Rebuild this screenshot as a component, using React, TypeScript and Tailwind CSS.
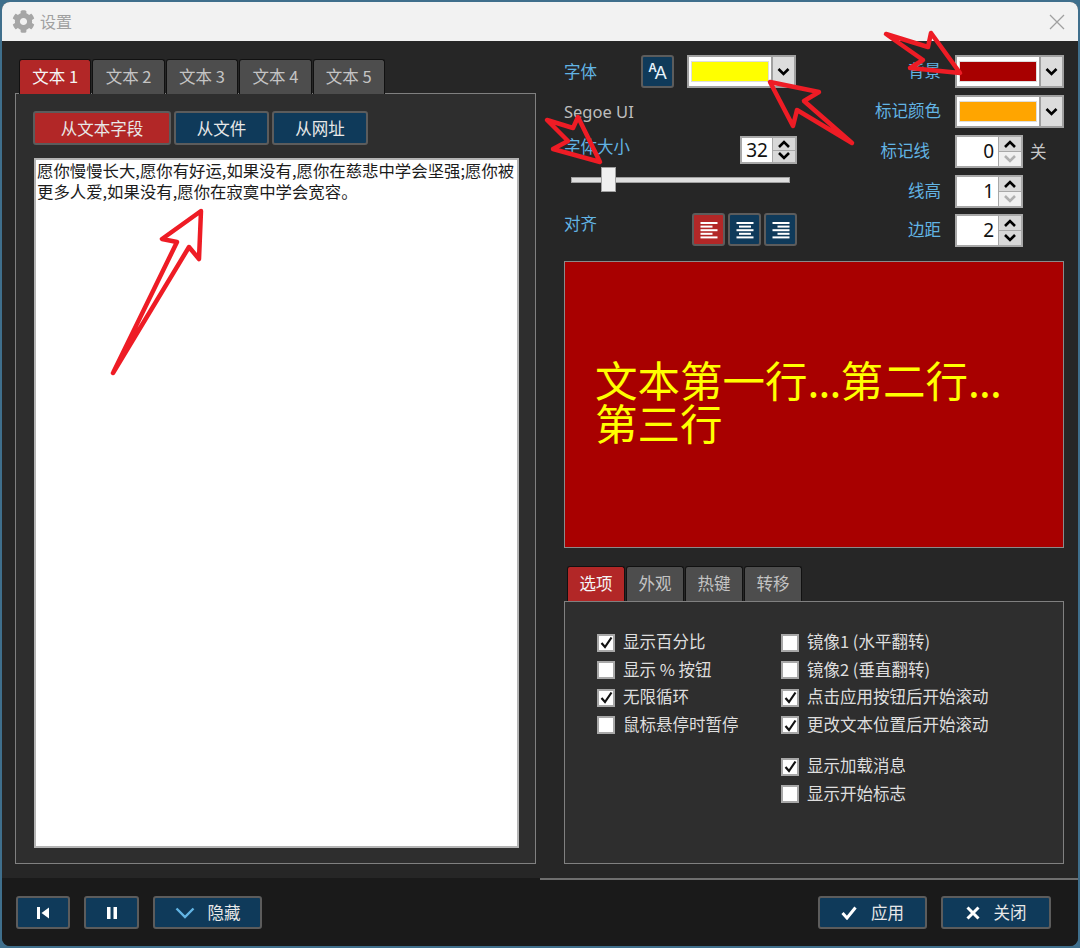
import React from "react";
import { FaCog } from "react-icons/fa";

const Chev = ({ up = false, dim = false, w = 12 }: { up?: boolean; dim?: boolean; w?: number }) => (
  <svg width={w} height={8} viewBox="0 0 12 8">
    <path d={up ? "M1 7 L6 2 L11 7" : "M1 1 L6 6 L11 1"} fill="none" stroke={dim ? "#b0b0b0" : "#000"} strokeWidth="2.6" />
  </svg>
);

const Tab = ({ label, active, w }: { label: string; active?: boolean; w: string }) => (
  <div
    className={`${w} flex h-[35px] items-center justify-center rounded-t-[3px] border border-b-0 border-[#111111] pb-[2px] text-[16.5px] ${
      active ? "bg-[#b22727] text-[#f5f5f5]" : "bg-[#4d4d4d] text-[#c4c4c4]"
    }`}
  >
    {label}
  </div>
);

const Btn = ({ children, red, cls }: { children: React.ReactNode; red?: boolean; cls: string }) => (
  <div
    className={`${cls} flex items-center justify-center rounded-[3px] border-2 border-[#5c5c5c] text-[16.5px] text-[#e8e8e8] ${
      red ? "bg-[#b22727]" : "bg-[#0f3a5a]"
    }`}
  >
    {children}
  </div>
);

const Combo = ({ color }: { color: string }) => (
  <div className="flex h-[33px] w-[109px] border-2 border-[#a0a0a0] bg-white">
    <div className="flex flex-1 items-center px-[2px]">
      <div className="h-[21px] w-full border border-[#dddddd]" style={{ background: color }} />
    </div>
    <div className="flex w-[23px] items-center justify-center border-l-2 border-[#a0a0a0] bg-[#dcdcdc]">
      <Chev w={13} />
    </div>
  </div>
);

const Spin = ({ value, dim, w = "w-[68px]", h = "h-[33px]" }: { value: number; dim?: boolean; w?: string; h?: string }) => (
  <div className={`${w} ${h} flex border-2 border-[#a8a8a8] bg-white`}>
    <div className="flex flex-1 items-center justify-end pr-[4px] font-['Noto_Sans'] text-[19px] text-[#111111]">{value}</div>
    <div className="flex w-[23px] flex-col border-l border-[#a8a8a8] bg-[#d8d8d8]">
      <div className="flex flex-1 items-center justify-center border-b border-[#a8a8a8]">
        <Chev up />
      </div>
      <div className={`flex flex-1 items-center justify-center ${dim ? "bg-[#f0f0f0]" : ""}`}>
        <Chev dim={dim} />
      </div>
    </div>
  </div>
);

const AlignIcon = ({ kind }: { kind: "l" | "c" | "r" }) => {
  const lines = [17, 12, 17, 12, 17];
  return (
    <svg width="18" height="18" viewBox="0 0 18 18">
      {lines.map((len, i) => {
        const x = kind === "l" ? 0.5 : kind === "c" ? (18 - len) / 2 : 17.5 - len;
        return <rect key={i} x={x} y={1 + i * 3.6} width={len} height="2" fill="#fff" />;
      })}
    </svg>
  );
};

const Check = ({ label, on }: { label: string; on?: boolean }) => (
  <div className="flex h-[27.5px] items-center gap-[8px] text-[16.5px] text-[#dedede]">
    <div className="flex h-[18px] w-[18px] items-center justify-center border-2 border-[#a8a8a8] bg-white">
      {on && (
        <svg width="13" height="13" viewBox="0 0 13 13">
          <path d="M1.5 7 L5 11 L11.5 1.5" fill="none" stroke="#111" strokeWidth="2.2" />
        </svg>
      )}
    </div>
    <span className="pb-[2px]">{label}</span>
  </div>
);

const Label = ({ children }: { children: React.ReactNode }) => (
  <span className="text-[16.5px] text-[#62b4e4]">{children}</span>
);

const Arrow = ({ points }: { points: string }) => (
  <polygon points={points} fill="none" stroke="#ee1c25" strokeWidth="4.5" strokeLinejoin="round" />
);

export default function App() {
  return (
    <div
      className="h-[948px] w-[1080px] overflow-hidden bg-[#3f6f8c] pl-[2px] pt-[2px]"
      style={{ fontFamily: '"Noto Sans CJK SC", "Noto Sans", sans-serif' }}
    >
      <div className="relative flex h-[944px] w-[1076px] flex-col overflow-hidden rounded-[8px] bg-[#262626]">
        {/* title bar */}
        <div className="flex h-[39px] items-center bg-[#f2f2f2] pl-[10px] pr-[13px]">
          <FaCog className="text-[23px] text-[#a6a6a6]" />
          <span className="ml-[5px] pb-[2px] text-[16px] text-[#a0a0a0]">设置</span>
          <svg className="ml-auto" width="16" height="16" viewBox="0 0 16 16">
            <path d="M1 1 L15 15 M15 1 L1 15" stroke="#a0a0a0" strokeWidth="1.3" />
          </svg>
        </div>

        {/* main */}
        <div className="flex h-[837px]">
          {/* left */}
          <div className="w-[538px] pl-[13px] pt-[18px]">
            <div className="ml-[4px] flex h-[34px] gap-[1px]">
              <Tab label="文本 1" active w="w-[72.4px]" />
              <Tab label="文本 2" w="w-[72.4px]" />
              <Tab label="文本 3" w="w-[72.4px]" />
              <Tab label="文本 4" w="w-[72.4px]" />
              <Tab label="文本 5" w="w-[72.4px]" />
            </div>
            <div className="flex h-[771px] w-[521px] flex-col border border-[#808080] bg-[#2e2e2e] pl-[17px] pt-[17px]">
              <div className="flex gap-[3px]">
                <Btn red cls="h-[34px] w-[138px]">从文本字段</Btn>
                <Btn cls="h-[34px] w-[95px]">从文件</Btn>
                <Btn cls="h-[34px] w-[96px]">从网址</Btn>
              </div>
              <div className="ml-[1px] mt-[13px] h-[690px] w-[485px] border-2 border-[#b4b4b4] bg-white pl-[1px] text-[16.4px] leading-[21px] text-[#1c1c1c]">
                愿你慢慢长大,愿你有好运,如果没有,愿你在慈悲中学会坚强;愿你被更多人爱,如果没有,愿你在寂寞中学会宽容。
              </div>
            </div>
          </div>

          {/* right */}
          <div className="w-[500px] pl-[24px] pt-[14px]">
            <div className="flex h-[206px] w-[500px] justify-between">
              <div className="w-[233px]">
                <div className="flex h-[33px] items-center">
                  <div className="w-[77px] pb-[1px]"><Label>字体</Label></div>
                  <Btn cls="h-[33px] w-[33px]">
                    <span className="flex items-start font-['Liberation_Sans'] leading-none text-[#e6f2fa]">
                      <span className="text-[12px] font-bold">A</span>
                      <span className="ml-[-2px] mt-[2px] text-[18px]">A</span>
                    </span>
                  </Btn>
                  <div className="ml-[13px]"><Combo color="#ffff00" /></div>
                </div>
                <div className="mt-[12px] font-['Noto_Sans'] text-[16.5px] leading-[24px] text-[#bdbdbd]">Segoe UI</div>
                <div className="mt-[12px] flex h-[28px] items-center justify-between">
                  <div className="mb-[7px]"><Label>字体大小</Label></div>
                  <Spin value={32} w="w-[57px]" h="h-[28px]" />
                </div>
                <div className="relative ml-[7px] mt-[13px] h-[6px] w-[219px] border border-[#a0a0a0] bg-[#dedede]">
                  <div className="absolute left-[29px] top-[-11px] h-[25px] w-[15px] border border-[#a0a0a0] bg-[#f0f0f0]" />
                </div>
                <div className="mt-[30px] flex h-[33px] items-center justify-between">
                  <div className="mb-[12px]"><Label>对齐</Label></div>
                  <div className="flex gap-[3px]">
                    <Btn red cls="h-[33px] w-[33px]"><AlignIcon kind="l" /></Btn>
                    <Btn cls="h-[33px] w-[33px]"><AlignIcon kind="c" /></Btn>
                    <Btn cls="h-[33px] w-[33px]"><AlignIcon kind="r" /></Btn>
                  </div>
                </div>
              </div>

              <div className="flex w-[189px] flex-col">
                <div className="flex h-[33px] items-center justify-end gap-[14px]"><div className="pb-[3px]"><Label>背景</Label></div><Combo color="#a80000" /></div>
                <div className="mt-[7px] flex h-[33px] items-center justify-end gap-[14px]"><div className="pb-[3px]"><Label>标记颜色</Label></div><Combo color="#ffa500" /></div>
                <div className="mt-[7px] flex h-[33px] items-center gap-[14px]">
                  <div className="w-[66px] whitespace-nowrap pb-[3px] pr-[11px] text-right"><Label>标记线</Label></div>
                  <Spin value={0} dim />
                  <span className="ml-[-7px] text-[16.5px] text-[#c8c8c8]">关</span>
                </div>
                <div className="mt-[7px] flex h-[33px] items-center gap-[14px]">
                  <div className="w-[66px] pb-[3px] text-right"><Label>线高</Label></div>
                  <Spin value={1} dim />
                </div>
                <div className="mt-[6px] flex h-[33px] items-center gap-[14px]">
                  <div className="w-[66px] pb-[3px] text-right"><Label>边距</Label></div>
                  <Spin value={2} />
                </div>
              </div>
            </div>

            <div className="flex h-[287px] w-[500px] items-center border border-[#8a8a8a] bg-[#a80000] px-[30px] text-[42.5px] leading-[43px] text-[#ffff00]">
              <div className="mt-[-10px]">
                文本第一行<span className="tracking-[-0.8px]">...</span>第二行<span className="tracking-[-0.8px]">...</span>第三行
              </div>
            </div>

            <div className="ml-[3px] mt-[18px] flex h-[35px] gap-[1px]">
              <Tab label="选项" active w="w-[58px]" />
              <Tab label="外观" w="w-[58px]" />
              <Tab label="热键" w="w-[58px]" />
              <Tab label="转移" w="w-[58px]" />
            </div>
            <div className="flex h-[263px] w-[500px] border border-[#808080] bg-[#2e2e2e] pl-[32px] pt-[27px]">
              <div className="w-[184px]">
                <Check label="显示百分比" on />
                <Check label="显示 % 按钮" />
                <Check label="无限循环" on />
                <Check label="鼠标悬停时暂停" />
              </div>
              <div>
                <Check label="镜像1 (水平翻转)" />
                <Check label="镜像2 (垂直翻转)" />
                <Check label="点击应用按钮后开始滚动" on />
                <Check label="更改文本位置后开始滚动" on />
                <div className="h-[14px]" />
                <Check label="显示加载消息" on />
                <Check label="显示开始标志" />
              </div>
            </div>
          </div>
        </div>

        {/* footer */}
        <div className="flex h-[68px] bg-[#1a1a1a]">
          <div className="flex w-[538px] gap-[14px] pl-[14px] pt-[18px]">
            <Btn cls="h-[33px] w-[54px]">
              <svg width="14" height="14" viewBox="0 0 14 14"><rect x="1" y="1" width="3" height="12" fill="#fff" /><path d="M13 1.5 V12.5 L5.5 7 Z" fill="#fff" /></svg>
            </Btn>
            <Btn cls="h-[33px] w-[55px]">
              <svg width="12" height="14" viewBox="0 0 12 14"><rect x="1" y="1" width="3.5" height="12" fill="#fff" /><rect x="7.5" y="1" width="3.5" height="12" fill="#fff" /></svg>
            </Btn>
            <Btn cls="h-[33px] w-[109px] gap-[13px]">
              <svg width="20" height="12" viewBox="0 0 20 12"><path d="M1.5 1.5 L10 10 L18.5 1.5" fill="none" stroke="#62b4e4" strokeWidth="2.4" /></svg>
              <span>隐藏</span>
            </Btn>
          </div>
          <div className="flex flex-1 justify-end gap-[14px] border-t-2 border-[#6e6e6e] pr-[27px] pt-[16px]">
            <Btn cls="h-[33px] w-[109px] gap-[14px]">
              <svg width="16" height="14" viewBox="0 0 16 14"><path d="M1.5 7 L6 12 L14.5 1.5" fill="none" stroke="#fff" strokeWidth="3" /></svg>
              <span>应用</span>
            </Btn>
            <Btn cls="h-[33px] w-[110px] gap-[14px]">
              <svg width="14" height="14" viewBox="0 0 14 14"><path d="M1.5 1.5 L12.5 12.5 M12.5 1.5 L1.5 12.5" fill="none" stroke="#fff" strokeWidth="3" /></svg>
              <span>关闭</span>
            </Btn>
          </div>
        </div>

        {/* annotation arrows drawn over the window */}
        <svg className="pointer-events-none absolute left-[-2px] top-[-2px]" width="1080" height="948" viewBox="0 0 1080 948">
          <Arrow points="201,211 162,239 177,242 113,373 189,247 199,259" />
          <Arrow points="770,82 819,92 804,101 852,143 797,110 793,126" />
          <Arrow points="886,34 928,47 931,33 960,73 910,68 923,60" />
          <Arrow points="547,120 573,128 578,117 600,162 553,149 568,141" />
        </svg>
      </div>
    </div>
  );
}
